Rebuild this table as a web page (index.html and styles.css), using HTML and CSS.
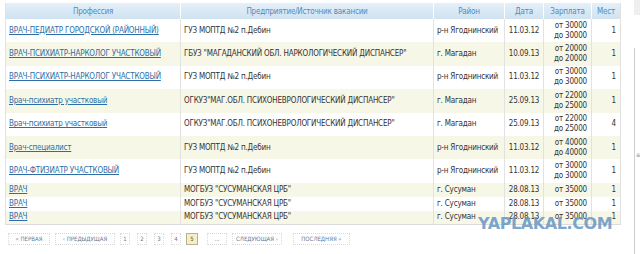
FILE: index.html
```html
<!DOCTYPE html>
<html lang="ru">
<head>
<meta charset="utf-8">
<link rel="stylesheet" href="styles.css">
</head>
<body>
<div class="page">
  <div class="main">
    <table class="vac">
      <colgroup>
        <col class="c1"><col class="c2"><col class="c3"><col class="c4"><col class="c5"><col class="c6">
      </colgroup>
      <thead>
        <tr><th>Профессия</th><th>Предприятие/Источник вакансии</th><th>Район</th><th>Дата</th><th>Зарплата</th><th>Мест</th></tr>
      </thead>
      <tbody>
        <tr class="r2"><td><a href="#">ВРАЧ-ПЕДИАТР ГОРОДСКОЙ (РАЙОННЫЙ)</a></td><td>ГУЗ МОПТД №2 п.Дебин</td><td>р-н Ягоднинский</td><td class="ctr">11.03.12</td><td class="rt">от 30000<br>до 30000</td><td class="rt">1</td></tr>
        <tr class="r2"><td><a href="#">ВРАЧ-ПСИХИАТР-НАРКОЛОГ УЧАСТКОВЫЙ</a></td><td>ГБУЗ "МАГАДАНСКИЙ ОБЛ. НАРКОЛОГИЧЕСКИЙ ДИСПАНСЕР"</td><td>г. Магадан</td><td class="ctr">10.09.13</td><td class="rt">от 20000<br>до 20000</td><td class="rt">1</td></tr>
        <tr class="r2"><td><a href="#">ВРАЧ-ПСИХИАТР-НАРКОЛОГ УЧАСТКОВЫЙ</a></td><td>ГУЗ МОПТД №2 п.Дебин</td><td>р-н Ягоднинский</td><td class="ctr">11.03.12</td><td class="rt">от 30000<br>до 30000</td><td class="rt">1</td></tr>
        <tr class="r2"><td><a href="#">Врач-психиатр участковый</a></td><td>ОГКУЗ"МАГ.ОБЛ. ПСИХОНЕВРОЛОГИЧЕСКИЙ ДИСПАНСЕР"</td><td>г. Магадан</td><td class="ctr">25.09.13</td><td class="rt">от 22000<br>до 25000</td><td class="rt">1</td></tr>
        <tr class="r2"><td><a href="#">Врач-психиатр участковый</a></td><td>ОГКУЗ"МАГ.ОБЛ. ПСИХОНЕВРОЛОГИЧЕСКИЙ ДИСПАНСЕР"</td><td>г. Магадан</td><td class="ctr">25.09.13</td><td class="rt">от 22000<br>до 25000</td><td class="rt">4</td></tr>
        <tr class="r2"><td><a href="#">Врач-специалист</a></td><td>ГУЗ МОПТД №2 п.Дебин</td><td>р-н Ягоднинский</td><td class="ctr">11.03.12</td><td class="rt">от 40000<br>до 40000</td><td class="rt">1</td></tr>
        <tr class="r2"><td><a href="#">ВРАЧ-ФТИЗИАТР УЧАСТКОВЫЙ</a></td><td>ГУЗ МОПТД №2 п.Дебин</td><td>р-н Ягоднинский</td><td class="ctr">11.03.12</td><td class="rt">от 30000<br>до 30000</td><td class="rt">1</td></tr>
        <tr class="r1"><td><a href="#">ВРАЧ</a></td><td>МОГБУЗ "СУСУМАНСКАЯ ЦРБ"</td><td>г. Сусуман</td><td class="ctr">28.08.13</td><td class="rt">от 35000</td><td class="rt">1</td></tr>
        <tr class="r1"><td><a href="#">ВРАЧ</a></td><td>МОГБУЗ "СУСУМАНСКАЯ ЦРБ"</td><td>г. Сусуман</td><td class="ctr">28.08.13</td><td class="rt">от 35000</td><td class="rt">1</td></tr>
        <tr class="r1"><td><a href="#">ВРАЧ</a></td><td>МОГБУЗ "СУСУМАНСКАЯ ЦРБ"</td><td>г. Сусуман</td><td class="ctr">28.08.13</td><td class="rt">от 35000</td><td class="rt">1</td></tr>
      </tbody>
    </table>
    <div class="pager">
      <a class="pg first" href="#">« ПЕРВАЯ</a>
      <a class="pg prev" href="#">‹ ПРЕДЫДУЩАЯ</a>
      <a class="pg num n1" href="#">1</a>
      <a class="pg num" href="#">2</a>
      <a class="pg num" href="#">3</a>
      <a class="pg num" href="#">4</a>
      <span class="pg num active">5</span>
      <span class="pg dots">...</span>
      <a class="pg next" href="#">СЛЕДУЮЩАЯ ›</a>
      <a class="pg last" href="#">ПОСЛЕДНЯЯ »</a>
    </div>
    <div class="mark">YAPLAKAL.COM</div>
  </div>
  <div class="side"><span class="grip">≡</span></div>
</div>
</body>
</html>
```
FILE: styles.css
```css
html, body {
  margin: 0;
  padding: 0;
  background: #ffffff;
}
body {
  font-family: "DejaVu Sans Condensed", "Liberation Sans", Arial, sans-serif;
  font-size: 8px;
  color: #333333;
}
.page {
  display: flex;
  align-items: flex-start;
  padding: 3px 0 0 5px;
  height: 251px;
  position: relative;
}
.main {
  position: relative;
  width: 615px;
}
.vac {
  width: 615px;
  border-collapse: collapse;
  table-layout: fixed;
  border-left: 1px solid #e2e2e2;
  border-right: 1px solid #e2e2e2;
  border-bottom: 1px solid #dcdcdc;
  letter-spacing: -0.2px;
}
.c1 { width: 175px; }
.c2 { width: 253px; }
.c3 { width: 71px; }
.c4 { width: 39px; }
.c5 { width: 48px; }
.c6 { width: 29px; }
.vac th {
  height: 16px;
  padding: 0 3px;
  font-weight: normal;
  font-size: 8px;
  color: #5089c0;
  background: linear-gradient(#e4eff8, #cfe2f1);
  border-left: 1px solid #ffffff;
  text-align: center;
  white-space: nowrap;
}
.vac th:first-child { border-left: none; }
.vac td {
  padding: 0 3px;
  line-height: 10px;
  vertical-align: middle;
  white-space: nowrap;
  overflow: hidden;
  border-left: 1px solid #e2e2e2;
}
.vac tbody tr:nth-child(even) td { background: #f7f7e7; }
.vac tr.r2 { height: 23.4px; }
.vac tr.r1 { height: 14px; }
.vac td a {
  color: #2e6ea6;
  text-decoration: underline;
}
.vac td.ctr { text-align: center; }
.vac td.rt { text-align: right; padding-right: 4px; }
.pager {
  display: flex;
  align-items: center;
  margin-top: 8px;
  padding-left: 3px;
}
.pg {
  box-sizing: border-box;
  height: 12px;
  line-height: 10px;
  font-size: 6px;
  color: #667894;
  text-decoration: none;
  text-align: center;
  border: 1px dotted #d9d9d9;
  white-space: nowrap;
}
.pg.first { width: 42px; }
.pg.prev { width: 60px; margin-left: 5px; }
.pg.num { width: 10px; margin-left: 7px; }
.pg.n1 { margin-left: 5px; }
.pg.active {
  width: 12px;
  margin-left: 5px;
  background: #f4efc4;
  border: 1px solid #b5b197;
  color: #555;
}
.pg.dots { width: 20px; margin-left: 9px; }
.pg.next { width: 50px; margin-left: 5px; }
.pg.last { width: 57px; margin-left: 11px; }
.mark {
  position: absolute;
  left: 473px;
  top: 215px;
  font-family: "DejaVu Sans", sans-serif;
  font-weight: bold;
  font-size: 16px;
  line-height: 12px;
  letter-spacing: -0.4px;
  color: rgba(100, 150, 195, 0.85);
}
.side {
  margin-left: 14px;
  margin-top: 45px;
  width: 6px;
  height: 206px;
  border-left: 1px solid #cfcfcf;
  position: relative;
}
.side::before {
  content: "";
  position: absolute;
  left: -1px;
  top: -48px;
  width: 6px;
  height: 15px;
  background: #efefef;
}
.grip {
  position: absolute;
  left: 1px;
  top: 103px;
  font-size: 6px;
  color: #888;
}
```
